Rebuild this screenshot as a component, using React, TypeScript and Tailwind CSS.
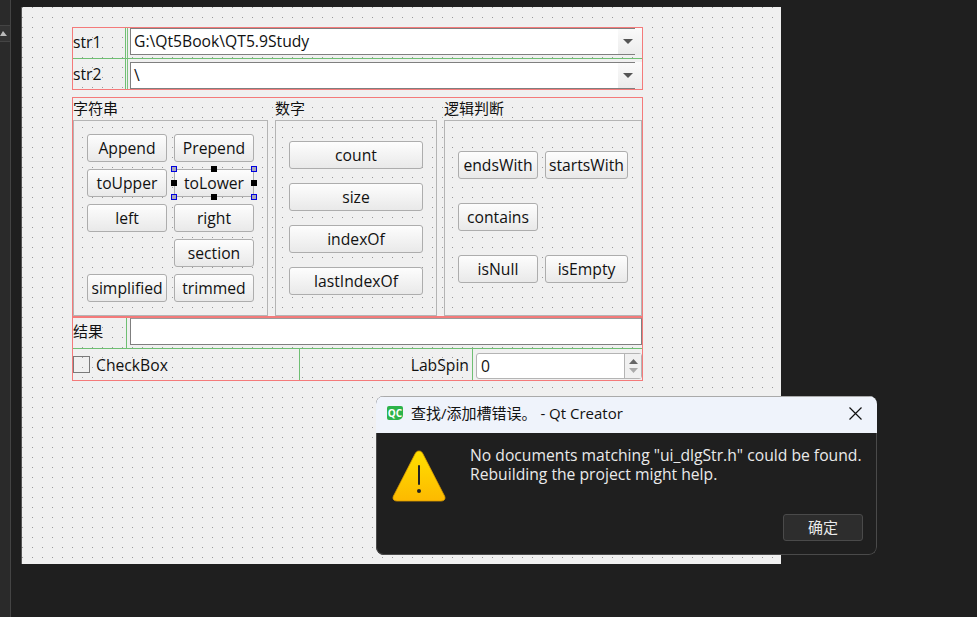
const FONT = "font-['Open_Sans','Noto_Sans_CJK_SC',sans-serif]";

const Btn = ({ label, className = "" }: { label: string; className?: string }) => (
    <div className={`h-[28px] flex items-center justify-center pt-[2px] rounded-[3px] border border-[#adadad] bg-gradient-to-b from-[#fdfdfd] to-[#e9e9e9] text-[15.7px] text-[#111] whitespace-nowrap ${className}`}>
        {label}
    </div>
);

// selection handle on the designer widget
const Handle = ({ className }: { className: string }) => (
    <span className={`absolute w-[6px] h-[6px] ${className}`} />
);

const Combo = ({ value, className = "" }: { value: string; className?: string }) => (
    <div className={`flex h-[27px] ml-[2px] ${className}`}>
        <div className="w-[505px] flex border-y border-[#7f7f7f]">
            <div className="flex-1 bg-white flex items-center pl-[3px] pt-[1px] text-[15.7px] text-[#111] border-l border-[#7f7f7f]">{value}</div>
            <div className="w-[17px] bg-gradient-to-b from-[#fafafa] to-[#ececec] flex items-center justify-center">
                <svg className="ml-[3px]" width="10" height="5" viewBox="0 0 10 5"><path d="M0 0h10L5 5z" fill="#555" /></svg>
            </div>
        </div>
        <div className="w-[7px] bg-gradient-to-b from-[#fafafa] to-[#ececec]" />
    </div>
);

const GroupCol = ({ title, className, children }: { title: string; className: string; children: React.ReactNode }) => (
    <div className={`flex flex-col ${className}`}>
        <div className="h-[22px] flex items-center pb-[2px] text-[15px] text-[#111]">{title}</div>
        <div className="h-[196px] border border-[#b4b4b4]">{children}</div>
    </div>
);

export default function App() {
    return (
        <div className={`relative w-[977px] h-[617px] overflow-hidden bg-[#1f1f1f] flex ${FONT}`}>
            {/* left rail */}
            <div className="w-[11px] h-full bg-[#2a2a2a] border-r border-[#444] pt-[25px] shrink-0">
                <div className="h-[17px] bg-[#333] border-y border-[#444] flex items-center">
                    <svg width="8" height="5" viewBox="0 0 8 5"><path d="M3 0L7 5H0z" fill="#bbb" /></svg>
                </div>
            </div>

            <div className="pl-[11px] pt-[7px]">
                {/* form canvas */}
                <div className="w-[759px] h-[557px] bg-[#f0f0f0] bg-[radial-gradient(circle_at_0.5px_0.5px,#999_0.7px,transparent_0.7px)] bg-[size:10px_10px] pl-[50px] pt-[20px] shadow-[-1px_0_0_#555]">
                    {/* str rows */}
                    <div className="w-[571px] h-[63px] border border-[#f47a7a] flex flex-col">
                        <div className="h-[31px] flex border-b border-[#6fbf73]">
                            <div className="w-[54px] flex items-center text-[15.7px] text-[#111] border-r border-[#6fbf73]">str1</div>
                            <div className="w-px bg-[#7cc47f] ml-px" />
                            <Combo value="G:\Qt5Book\QT5.9Study" className="-ml-px" />
                        </div>
                        <div className="h-[30px] flex">
                            <div className="w-[54px] flex items-center pt-[2px] text-[15.7px] text-[#111] border-r border-[#6fbf73]">str2</div>
                            <div className="w-px bg-[#7cc47f] ml-px" />
                            <Combo value="\" className="mt-[3px] -ml-px" />
                        </div>
                    </div>

                    {/* groups */}
                    <div className="w-[571px] h-[220px] mt-[7px] border border-[#f47a7a] flex gap-[7px]">
                        <GroupCol title="字符串" className="w-[195px]">
                            <div className="grid grid-cols-[80px_80px] gap-[7px] pl-[13px] pt-[13px]">
                                <Btn label="Append" />
                                <Btn label="Prepend" />
                                <Btn label="toUpper" />
                                <div className="relative">
                                    <Btn label="toLower" className="border-[#8a8aa8] rounded-none" />
                                    <Handle className="-left-[3px] -top-[3px] bg-[#a8a8b8] border border-[#0000e0]" />
                                    <Handle className="left-[37px] -top-[3px] bg-black" />
                                    <Handle className="-right-[3px] -top-[3px] bg-[#a8a8b8] border border-[#0000e0]" />
                                    <Handle className="-left-[3px] top-[11px] bg-black" />
                                    <Handle className="-right-[3px] top-[11px] bg-black" />
                                    <Handle className="-left-[3px] -bottom-[3px] bg-[#a8a8b8] border border-[#0000e0]" />
                                    <Handle className="left-[37px] -bottom-[3px] bg-black" />
                                    <Handle className="-right-[3px] -bottom-[3px] bg-[#a8a8b8] border border-[#0000e0]" />
                                </div>
                                <Btn label="left" />
                                <Btn label="right" />
                                <div />
                                <Btn label="section" />
                                <Btn label="simplified" />
                                <Btn label="trimmed" />
                            </div>
                        </GroupCol>
                        <GroupCol title="数字" className="w-[162px]">
                            <div className="flex flex-col gap-[14px] pl-[13px] pt-[20px]">
                                <Btn label="count" className="w-[134px]" />
                                <Btn label="size" className="w-[134px]" />
                                <Btn label="indexOf" className="w-[134px]" />
                                <Btn label="lastIndexOf" className="w-[134px]" />
                            </div>
                        </GroupCol>
                        <GroupCol title="逻辑判断" className="w-[198px]">
                            <div className="grid grid-cols-[80px_83px] gap-x-[7px] gap-y-[24px] pl-[13px] pt-[30px]">
                                <Btn label="endsWith" />
                                <Btn label="startsWith" />
                                <Btn label="contains" />
                                <div />
                                <Btn label="isNull" />
                                <Btn label="isEmpty" />
                            </div>
                        </GroupCol>
                    </div>

                    {/* result + bottom row */}
                    <div className="w-[571px] h-[64px] border border-[#f47a7a] flex flex-col">
                        <div className="h-[31px] flex border-b border-[#6fbf73]">
                            <div className="w-[54px] flex items-center pb-[3px] text-[15px] text-[#111] border-r border-[#6fbf73]">结果</div>
                            <div className="w-[512px] ml-[3px] h-[27px] bg-white border border-t-[#9a9a9a] border-[#7f7f7f]" />
                        </div>
                        <div className="flex-1 flex">
                            <div className="w-[227px] flex items-center border-r border-[#6fbf73]">
                                <span className="w-[17px] h-[17px] border border-[#7a7a7a]" />
                                <span className="ml-[6px] pt-[2px] text-[15.7px] text-[#111]">CheckBox</span>
                            </div>
                            <div className="w-[173px] flex items-center justify-end pr-[3px] pt-[2px] text-[15.7px] text-[#111] border-r border-[#6fbf73]">LabSpin</div>
                            <div className="ml-[3px] mt-[4px] w-[166px] h-[26px] flex bg-white border border-[#b4b4b4] rounded-[3px]">
                                <div className="flex-1 flex items-center pl-[4px] pt-[1px] text-[15.7px] text-[#111]">0</div>
                                <div className="w-[17px] bg-[#f0f0f0] border-l border-[#b4b4b4] flex flex-col items-center justify-center gap-[4px]">
                                    <svg width="9" height="5" viewBox="0 0 9 5"><path d="M4.5 0L9 5H0z" fill="#666" /></svg>
                                    <svg width="9" height="5" viewBox="0 0 9 5"><path d="M0 0h9L4.5 5z" fill="#aaa" /></svg>
                                </div>
                            </div>
                        </div>
                    </div>
                </div>
            </div>

            {/* error dialog */}
            <div className="absolute left-[376px] top-[396px] w-[501px] h-[159px] rounded-[8px] overflow-hidden bg-[#1f1f1f] flex flex-col">
                <div className="h-[37px] bg-[#eff3fb] border-t border-[#aaa] flex items-center pl-[11px] pr-[15px] pb-[4px] shrink-0">
                    <span className="w-[16px] h-[14px] bg-[#2cb34a] rounded-[2px] rounded-br-[5px] text-white text-[10px] font-bold flex items-center justify-center leading-none">QC</span>
                    <span className="ml-[8px] text-[15px] text-[#111]">查找/添加槽错误。 - Qt Creator</span>
                    <svg className="ml-auto" width="13" height="13" viewBox="0 0 13 13"><path d="M0.5 0.5l12 12M12.5 0.5l-12 12" stroke="#111" strokeWidth="1.2" fill="none" /></svg>
                </div>
                <div className="flex-1 relative flex pl-[16px] pt-[16px] border-x border-b border-[#4a4a4a] rounded-b-[8px]">
                    <svg className="shrink-0 -ml-px" width="54" height="54" viewBox="0 0 54 54">
                        <defs>
                            <linearGradient id="warn" x1="0" y1="0" x2="0" y2="1">
                                <stop offset="0" stopColor="#ffe000" />
                                <stop offset="1" stopColor="#fdb900" />
                            </linearGradient>
                        </defs>
                        <path d="M27 2c-2 0-3 1-4 3L2 46c-2 3-1 6 3 6h44c4 0 5-3 3-6L31 5c-1-2-2-3-4-3z" fill="url(#warn)" stroke="#d99a00" strokeWidth="0.8" />
                        <rect x="26" y="16" width="2" height="20" rx="1" fill="#222" />
                        <circle cx="27" cy="42" r="2" fill="#222" />
                    </svg>
                    <p className="ml-[24px] -mt-[3px] text-[15.7px] leading-[19px] text-[#eaeaea]">
                        No documents matching "ui_dlgStr.h" could be found.<br />
                        Rebuilding the project might help.
                    </p>
                    <div className="absolute right-[13px] bottom-[13px] w-[80px] h-[27px] rounded-[3px] border border-[#4a4a4a] bg-[#2d2d2d] text-[#eaeaea] text-[15px] flex items-center justify-center">确定</div>
                </div>
            </div>
        </div>
    );
}
